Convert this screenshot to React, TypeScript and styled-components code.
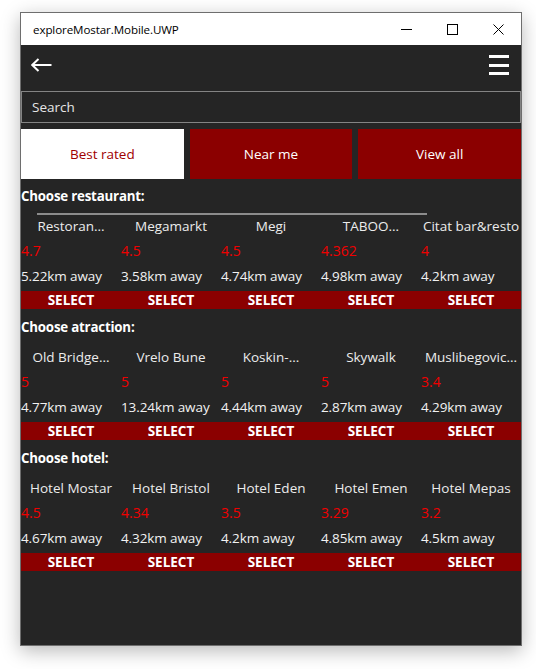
import React from "react";
import styled, { createGlobalStyle } from "styled-components";

const Global = createGlobalStyle`
  html, body { margin: 0; padding: 0; background: #ffffff; }
  * { box-sizing: border-box; }
`;

const Page = styled.div`
  padding: 12px 0 0 20px;
  width: 536px;
  height: 669px;
  overflow: hidden;
`;

const Window = styled.div`
  width: 502px;
  height: 634px;
  border: 1px solid #6e6e6e;
  box-shadow: 0 5px 18px rgba(0, 0, 0, 0.28);
  display: flex;
  flex-direction: column;
  font-family: "Open Sans", "Noto Sans", sans-serif;
  overflow: hidden;
`;

const TitleBar = styled.div`
  height: 32px;
  flex: none;
  background: #ffffff;
  display: flex;
  align-items: center;
  padding-left: 12px;
`;

const TitleText = styled.div`
  flex: 1;
  font-size: 11.6px;
  color: #000;
  letter-spacing: -0.1px;
`;

const CtrlButton = styled.div`
  width: 46px;
  height: 32px;
  display: flex;
  align-items: center;
  justify-content: center;
`;

const Body = styled.div`
  flex: 1;
  background: #252525;
  display: flex;
  flex-direction: column;
`;

const NavBar = styled.div`
  height: 46px;
  display: flex;
  align-items: center;
  justify-content: space-between;
  padding: 0 12px 6px 10px;
`;

const Hamburger = styled.div`
  width: 20px;
  display: flex;
  flex-direction: column;
  gap: 5.5px;
  span {
    display: block;
    height: 3px;
    background: #ffffff;
  }
`;

const SearchBox = styled.div`
  height: 32px;
  border: 1px solid #848484;
  display: flex;
  align-items: center;
  padding-left: 10px;
  color: #e6e6e6;
  font-size: 13.5px;
`;

const Tabs = styled.div`
  display: grid;
  grid-template-columns: repeat(3, 1fr);
  gap: 6px;
  margin-top: 6px;
`;

const Tab = styled.div<{ $active?: boolean }>`
  height: 50px;
  display: flex;
  align-items: center;
  justify-content: center;
  font-size: 13.5px;
  background: ${(p) => (p.$active ? "#ffffff" : "#8b0000")};
  color: ${(p) => (p.$active ? "#a00000" : "#ffffff")};
`;

const Section = styled.div`
  margin-top: 8px;
  position: relative;
  & + & {
    margin-top: 9px;
  }
`;

const SectionTitle = styled.div`
  height: 18px;
  line-height: 18px;
  font-size: 13.3px;
  font-weight: 700;
  color: #ffffff;
  letter-spacing: -0.2px;
`;

const ScrollIndicator = styled.div`
  position: absolute;
  left: 16px;
  top: 26px;
  width: 390px;
  height: 2px;
  background: #8c8c8c;
`;

const List = styled.div`
  display: flex;
`;

const Item = styled.div`
  width: 100px;
  flex: none;
  padding-top: 11px;
  display: flex;
  flex-direction: column;
  gap: 5px;
`;

const Name = styled.div`
  height: 20px;
  line-height: 20px;
  text-align: center;
  font-size: 13.5px;
  color: #ececec;
  white-space: nowrap;
  overflow: hidden;
`;

const Rating = styled.div`
  height: 20px;
  line-height: 20px;
  font-size: 14px;
  font-weight: 400;
  color: #f00000;
`;

const Distance = styled.div`
  height: 20px;
  line-height: 20px;
  font-size: 13.5px;
  color: #f2f2f2;
  white-space: nowrap;
  letter-spacing: -0.1px;
`;

const SelectButton = styled.div`
  height: 18px;
  line-height: 18px;
  background: #8b0000;
  color: #ffffff;
  font-size: 13.5px;
  font-weight: 700;
  text-align: center;
`;

type Place = { name: string; rating: string; dist: string };

const restaurants: Place[] = [
  { name: "Restoran...", rating: "4.7", dist: "5.22km away" },
  { name: "Megamarkt", rating: "4.5", dist: "3.58km away" },
  { name: "Megi", rating: "4.5", dist: "4.74km away" },
  { name: "TABOO...", rating: "4.362", dist: "4.98km away" },
  { name: "Citat bar&resto", rating: "4", dist: "4.2km away" },
];

const attractions: Place[] = [
  { name: "Old Bridge...", rating: "5", dist: "4.77km away" },
  { name: "Vrelo Bune", rating: "5", dist: "13.24km away" },
  { name: "Koskin-...", rating: "5", dist: "4.44km away" },
  { name: "Skywalk", rating: "5", dist: "2.87km away" },
  { name: "Muslibegovic...", rating: "3.4", dist: "4.29km away" },
];

const hotels: Place[] = [
  { name: "Hotel Mostar", rating: "4.5", dist: "4.67km away" },
  { name: "Hotel Bristol", rating: "4.34", dist: "4.32km away" },
  { name: "Hotel Eden", rating: "3.5", dist: "4.2km away" },
  { name: "Hotel Emen", rating: "3.29", dist: "4.85km away" },
  { name: "Hotel Mepas", rating: "3.2", dist: "4.5km away" },
];

function PlaceSection({ title, items, scroll }: { title: string; items: Place[]; scroll?: boolean }) {
  return (
    <Section>
      <SectionTitle>{title}</SectionTitle>
      <List>
        {items.map((it) => (
          <Item key={it.name}>
            <Name>{it.name}</Name>
            <Rating>{it.rating}</Rating>
            <Distance>{it.dist}</Distance>
            <SelectButton>SELECT</SelectButton>
          </Item>
        ))}
      </List>
      {scroll && <ScrollIndicator />}
    </Section>
  );
}

export default function App() {
  return (
    <Page>
      <Global />
      <Window>
        <TitleBar>
          <TitleText>exploreMostar.Mobile.UWP</TitleText>
          <CtrlButton>
            <svg width="11" height="11" viewBox="0 0 11 11">
              <line x1="0" y1="5.5" x2="11" y2="5.5" stroke="#000" strokeWidth="1" />
            </svg>
          </CtrlButton>
          <CtrlButton>
            <svg width="11" height="11" viewBox="0 0 11 11">
              <rect x="0.5" y="0.5" width="10" height="10" fill="none" stroke="#000" strokeWidth="1" />
            </svg>
          </CtrlButton>
          <CtrlButton>
            <svg width="11" height="11" viewBox="0 0 11 11">
              <path d="M0.5 0.5 L10.5 10.5 M10.5 0.5 L0.5 10.5" stroke="#000" strokeWidth="1" />
            </svg>
          </CtrlButton>
        </TitleBar>
        <Body>
          <NavBar>
            <svg width="21" height="14" viewBox="0 0 21 14">
              <path d="M20.5 7 H1.5 M7.5 1 L1.2 7 L7.5 13" fill="none" stroke="#fff" strokeWidth="2" />
            </svg>
            <Hamburger>
              <span />
              <span />
              <span />
            </Hamburger>
          </NavBar>
          <SearchBox>Search</SearchBox>
          <Tabs>
            <Tab $active>Best rated</Tab>
            <Tab>Near me</Tab>
            <Tab>View all</Tab>
          </Tabs>
          <PlaceSection title="Choose restaurant:" items={restaurants} scroll />
          <PlaceSection title="Choose atraction:" items={attractions} />
          <PlaceSection title="Choose hotel:" items={hotels} />
        </Body>
      </Window>
    </Page>
  );
}
